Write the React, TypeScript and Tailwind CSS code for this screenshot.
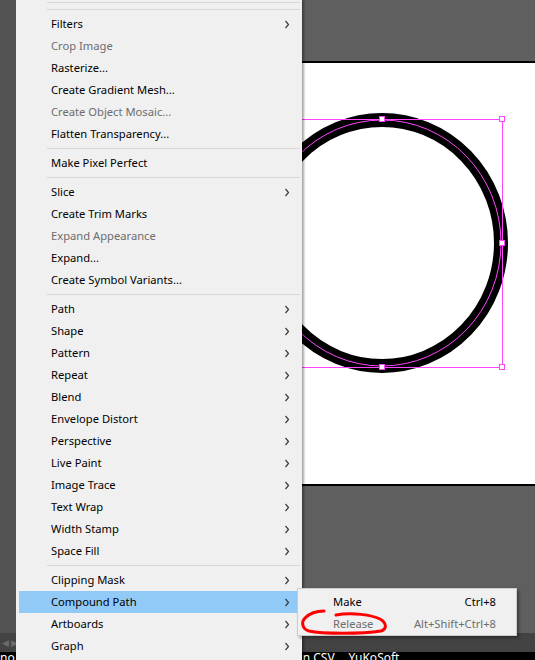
import React from "react";

type Item =
  | { kind: "sep" }
  | { kind: "item"; label: string; disabled?: boolean; sub?: boolean; active?: boolean };

const items: Item[] = [
  { kind: "item", label: "Filters", sub: true },
  { kind: "item", label: "Crop Image", disabled: true },
  { kind: "item", label: "Rasterize..." },
  { kind: "item", label: "Create Gradient Mesh..." },
  { kind: "item", label: "Create Object Mosaic...", disabled: true },
  { kind: "item", label: "Flatten Transparency..." },
  { kind: "sep" },
  { kind: "item", label: "Make Pixel Perfect" },
  { kind: "sep" },
  { kind: "item", label: "Slice", sub: true },
  { kind: "item", label: "Create Trim Marks" },
  { kind: "item", label: "Expand Appearance", disabled: true },
  { kind: "item", label: "Expand..." },
  { kind: "item", label: "Create Symbol Variants..." },
  { kind: "sep" },
  { kind: "item", label: "Path", sub: true },
  { kind: "item", label: "Shape", sub: true },
  { kind: "item", label: "Pattern", sub: true },
  { kind: "item", label: "Repeat", sub: true },
  { kind: "item", label: "Blend", sub: true },
  { kind: "item", label: "Envelope Distort", sub: true },
  { kind: "item", label: "Perspective", sub: true },
  { kind: "item", label: "Live Paint", sub: true },
  { kind: "item", label: "Image Trace", sub: true },
  { kind: "item", label: "Text Wrap", sub: true },
  { kind: "item", label: "Width Stamp", sub: true },
  { kind: "item", label: "Space Fill", sub: true },
  { kind: "sep" },
  { kind: "item", label: "Clipping Mask", sub: true },
  { kind: "item", label: "Compound Path", sub: true, active: true },
  { kind: "item", label: "Artboards", sub: true },
  { kind: "item", label: "Graph", sub: true },
];

function Chevron() {
  return (
    <svg width="6" height="9" viewBox="0 0 6 9" className="shrink-0">
      <polyline points="1.5,1 4.5,4.5 1.5,8" fill="none" stroke="#3a3a3a" strokeWidth="1.2" />
    </svg>
  );
}

function Separator() {
  return (
    <div className="pl-[31px] pr-[2px] py-[3px]">
      <div className="h-px bg-[#d7d7d7]" />
    </div>
  );
}

function Canvas() {
  const pink = "#ff46ff";
  const anchors = [
    [382, 119],
    [502, 243],
    [382, 367],
    [502, 119],
    [502, 367],
  ];
  return (
    <svg className="pointer-events-none absolute inset-0" width="535" height="660" viewBox="0 0 535 660">
      <ellipse cx="382" cy="243" rx="119" ry="123" fill="none" stroke="#000" strokeWidth="14" />
      <ellipse cx="382" cy="243" rx="119" ry="123" fill="none" stroke={pink} strokeWidth="1" />
      <rect x="262.5" y="119.5" width="240" height="248" fill="none" stroke={pink} strokeWidth="1" />
      {anchors.map(([x, y], i) => (
        <rect key={i} x={x - 2.5} y={y - 2.5} width="5" height="5" fill="#fff" stroke={pink} strokeWidth="1" />
      ))}
    </svg>
  );
}

export default function App() {
  return (
    <div
      className="relative flex h-[660px] w-[535px] flex-col overflow-hidden bg-[#5f5f5f] text-[11.2px]"
      style={{ fontFamily: '"Noto Sans", "Liberation Sans", sans-serif' }}
    >
      {/* workspace */}
      <div className="flex h-[633px]">
        <div className="w-[16px] shrink-0 bg-[#535353]" />
        <div className="flex-1 pl-[60px] pt-[61px]">
          <div className="h-[425px] border-y-2 border-black bg-white" />
        </div>
      </div>
      <div className="flex h-[19px] items-center bg-[#434343] pl-[2px]">
        <span className="text-[9px] leading-none text-[#6a6a6a]">◀ ▶</span>
      </div>
      <div className="flex h-[8px] overflow-hidden bg-black text-[12px] text-white">
        <span className="-mt-[2px] leading-[16px]">no 7</span>
        <span className="ml-[278px] -mt-[2px] leading-[16px]">n CSV</span>
        <span className="ml-[14px] -mt-[2px] leading-[16px]">YuKoSoft</span>
      </div>

      <Canvas />

      {/* main menu */}
      <div className="absolute left-[16px] top-0 w-[286px] bg-[#f0f0f0] shadow-[2px_0_2px_rgba(0,0,0,0.35)]">
        <div className="pl-[31px] pr-[2px] pt-[2px]">
          <div className="h-px bg-[#d7d7d7]" />
          <div className="h-[6px]" />
          <div className="h-px bg-[#d7d7d7]" />
          <div className="h-[3px]" />
        </div>
        {items.map((it, i) =>
          it.kind === "sep" ? (
            <Separator key={i} />
          ) : (
            <div
              key={i}
              className={`mx-[3px] flex h-[22px] items-center pl-[32px] pr-[9px] ${
                it.active ? "bg-[#91c9f7]" : ""
              } ${it.disabled ? "text-[#6d6d6d]" : "text-black"}`}
            >
              <span className="flex-1 leading-none">{it.label}</span>
              {it.sub && <Chevron />}
            </div>
          )
        )}
        <div className="h-[20px]" />
      </div>

      {/* submenu */}
      <div className="absolute left-[297px] top-[588px] w-[220px] border border-[#cccccc] bg-[#f0f0f0] pt-[2px] shadow-[2px_2px_3px_rgba(0,0,0,0.35)]">
        <div className="flex h-[22px] items-center pl-[35px] pr-[20px] text-black">
          <span className="flex-1 leading-none">Make</span>
          <span className="leading-none">Ctrl+8</span>
        </div>
        <div className="flex h-[22px] items-center pl-[35px] pr-[20px] text-[#6d6d6d]">
          <span className="flex-1 leading-none">Release</span>
          <span className="leading-none">Alt+Shift+Ctrl+8</span>
        </div>
      </div>

      {/* red annotation */}
      <svg className="pointer-events-none absolute inset-0" width="535" height="660" viewBox="0 0 535 660">
        <path
          d="M336 615 C352 612 372 615 380 619 C387 623 387 629 381 631 C362 634 322 634 309 631 C302 629 301 622 305 618 C310 613 317 611 324 611"
          fill="none"
          stroke="#ff0000"
          strokeWidth="3"
          strokeLinecap="round"
        />
      </svg>
    </div>
  );
}
